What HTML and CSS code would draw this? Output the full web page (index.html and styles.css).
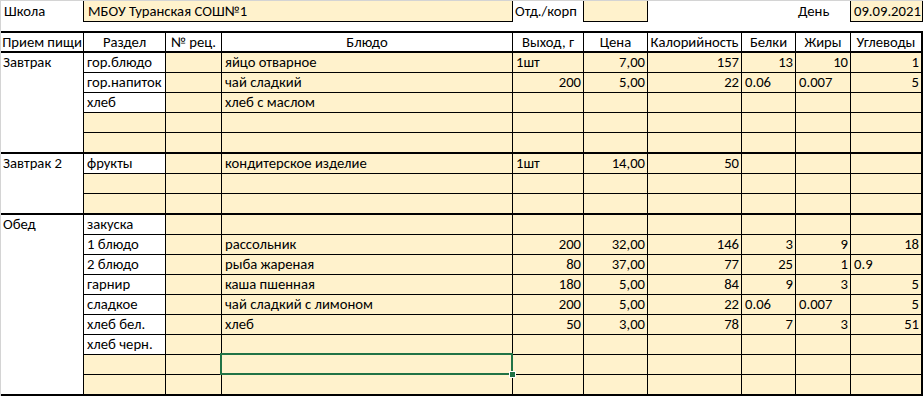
FILE: index.html
```html
<!DOCTYPE html>
<html lang="ru">
<head>
<meta charset="utf-8">
<title>Меню</title>
<link rel="stylesheet" href="styles.css">
</head>
<body>
<div class="sheet">
  <div class="top">
    <div class="t tl">Школа</div>
    <div class="t tbox school">МБОУ Туранская СОШ№1</div>
    <div class="t tl bl">Отд./корп</div>
    <div class="t tbox"></div>
    <div class="t"></div>
    <div class="t"></div>
    <div class="t tl bl">День</div>
    <div class="t tbox date">09.09.2021</div>
  </div>
  <div class="spacer"></div>
  <div class="hdr">
    <div class="c h">Прием пищи</div>
    <div class="c h">Раздел</div>
    <div class="c h">№ рец.</div>
    <div class="c h">Блюдо</div>
    <div class="c h">Выход, г</div>
    <div class="c h">Цена</div>
    <div class="c h">Калорийность</div>
    <div class="c h">Белки</div>
    <div class="c h">Жиры</div>
    <div class="c h j">Углеводы</div>
  </div>

  <div class="grp">
    <div class="c meal s5">Завтрак</div>
    <div class="c">гор.блюдо</div><div class="c p"></div><div class="c p">яйцо отварное</div><div class="c p">1шт</div><div class="c p r">7,00</div><div class="c p r">157</div><div class="c p r">13</div><div class="c p r">10</div><div class="c p r j">1</div>
    <div class="c">гор.напиток</div><div class="c p"></div><div class="c p">чай сладкий</div><div class="c p r">200</div><div class="c p r">5,00</div><div class="c p r">22</div><div class="c p">0.06</div><div class="c p">0.007</div><div class="c p r j">5</div>
    <div class="c">хлеб</div><div class="c p"></div><div class="c p">хлеб с маслом</div><div class="c p"></div><div class="c p"></div><div class="c p"></div><div class="c p"></div><div class="c p"></div><div class="c p j"></div>
    <div class="c p"></div><div class="c p"></div><div class="c p"></div><div class="c p"></div><div class="c p"></div><div class="c p"></div><div class="c p"></div><div class="c p"></div><div class="c p j"></div>
    <div class="c p"></div><div class="c p"></div><div class="c p"></div><div class="c p"></div><div class="c p"></div><div class="c p"></div><div class="c p"></div><div class="c p"></div><div class="c p j"></div>
  </div>

  <div class="grp">
    <div class="c meal s3">Завтрак 2</div>
    <div class="c">фрукты</div><div class="c p"></div><div class="c p">кондитерское изделие</div><div class="c p">1шт</div><div class="c p r">14,00</div><div class="c p r">50</div><div class="c p"></div><div class="c p"></div><div class="c p j"></div>
    <div class="c p"></div><div class="c p"></div><div class="c p"></div><div class="c p"></div><div class="c p"></div><div class="c p"></div><div class="c p"></div><div class="c p"></div><div class="c p j"></div>
    <div class="c p"></div><div class="c p"></div><div class="c p"></div><div class="c p"></div><div class="c p"></div><div class="c p"></div><div class="c p"></div><div class="c p"></div><div class="c p j"></div>
  </div>

  <div class="grp">
    <div class="c meal s9">Обед</div>
    <div class="c">закуска</div><div class="c p"></div><div class="c p"></div><div class="c p"></div><div class="c p"></div><div class="c p"></div><div class="c p"></div><div class="c p"></div><div class="c p j"></div>
    <div class="c">1 блюдо</div><div class="c p"></div><div class="c p">рассольник</div><div class="c p r">200</div><div class="c p r">32,00</div><div class="c p r">146</div><div class="c p r">3</div><div class="c p r">9</div><div class="c p r j">18</div>
    <div class="c">2 блюдо</div><div class="c p"></div><div class="c p">рыба жареная</div><div class="c p r">80</div><div class="c p r">37,00</div><div class="c p r">77</div><div class="c p r">25</div><div class="c p r">1</div><div class="c p j">0.9</div>
    <div class="c">гарнир</div><div class="c p"></div><div class="c p">каша пшенная</div><div class="c p r">180</div><div class="c p r">5,00</div><div class="c p r">84</div><div class="c p r">9</div><div class="c p r">3</div><div class="c p r j">5</div>
    <div class="c">сладкое</div><div class="c p"></div><div class="c p">чай сладкий с лимоном</div><div class="c p r">200</div><div class="c p r">5,00</div><div class="c p r">22</div><div class="c p">0.06</div><div class="c p">0.007</div><div class="c p r j">5</div>
    <div class="c">хлеб бел.</div><div class="c p"></div><div class="c p">хлеб</div><div class="c p r">50</div><div class="c p r">3,00</div><div class="c p r">78</div><div class="c p r">7</div><div class="c p r">3</div><div class="c p r j">51</div>
    <div class="c">хлеб черн.</div><div class="c p"></div><div class="c p"></div><div class="c p"></div><div class="c p"></div><div class="c p"></div><div class="c p"></div><div class="c p"></div><div class="c p j"></div>
    <div class="c p"></div><div class="c p"></div><div class="c p selcell"><span class="sel"><span class="handle"></span></span></div><div class="c p"></div><div class="c p"></div><div class="c p"></div><div class="c p"></div><div class="c p"></div><div class="c p j"></div>
    <div class="c p"></div><div class="c p"></div><div class="c p"></div><div class="c p"></div><div class="c p"></div><div class="c p"></div><div class="c p"></div><div class="c p"></div><div class="c p j"></div>
  </div>
</div>
</body>
</html>
```

FILE: styles.css
```css
html, body {
  margin: 0;
  padding: 0;
  background: #ffffff;
}
body {
  font-family: Carlito, Calibri, "Liberation Sans", sans-serif;
  font-size: 14.67px;
  color: #000000;
}
.sheet {
  width: 922px;
  border-left: 1px solid #d4d4d4;
  border-top: 1px solid #d4d4d4;
}
.top,
.hdr,
.grp {
  display: grid;
  grid-template-columns: 83px 82px 56px 291px 71px 64px 94px 54px 55px 72px;
}
.top {
  grid-auto-rows: 21px;
}
.t {
  box-sizing: border-box;
  line-height: 20px;
  padding: 0 3px;
  white-space: nowrap;
}
.tl {
  border-right: 1px solid #000;
}
.bl {
  padding-left: 2px;
}
.tbox {
  background: #fff2cc;
  border-right: 1px solid #000;
  border-bottom: 1px solid #000;
}
.school {
  grid-column: span 3;
  padding-left: 4px;
}
.date {
  text-align: center;
}
.spacer {
  height: 9px;
}
.hdr {
  border-top: 2px solid #000;
  border-bottom: 1px solid #000;
  grid-auto-rows: 19px;
}
.grp {
  grid-auto-rows: 20px;
  border-bottom: 1px solid #000;
}
.c {
  box-sizing: border-box;
  border-right: 1px solid #000;
  border-bottom: 1px solid #000;
  line-height: 19px;
  padding: 0 3px;
  white-space: nowrap;
  background: #ffffff;
}
.hdr .c {
  line-height: 18px;
}
.h {
  text-align: center;
  padding: 0 1px;
}
.j {
  border-right-width: 2px;
}
.p {
  background: #fff2cc;
}
.r {
  text-align: right;
  padding-right: 2px;
}
.meal {
  padding-left: 2px;
}
.s5 { grid-row: span 5; }
.s3 { grid-row: span 3; }
.s9 { grid-row: span 9; }
.selcell {
  position: relative;
}
.sel {
  position: absolute;
  left: -2px;
  top: -2px;
  right: -1px;
  bottom: -1px;
  border: 2px solid #217346;
  z-index: 2;
}
.handle {
  position: absolute;
  right: -5px;
  bottom: -5px;
  width: 5px;
  height: 5px;
  background: #217346;
  border: 1px solid #ffffff;
}
```
